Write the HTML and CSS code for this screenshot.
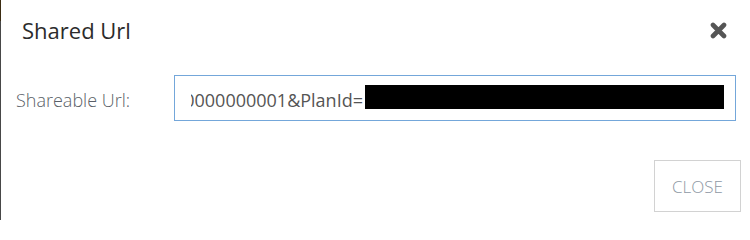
FILE: index.html
```html
<!DOCTYPE html>
<html lang="en">
<head>
<meta charset="utf-8">
<title>Shared Url</title>
<link rel="stylesheet" href="styles.css">
</head>
<body>
<div class="page">
  <div class="edge"></div>
  <div class="modal">
    <div class="modal-header">
      <h4 class="modal-title">Shared Url</h4>
      <button class="close-x" type="button" aria-label="Close">
        <svg width="17" height="17" viewBox="0 0 17 17" aria-hidden="true">
          <path d="M3 3 L14 14 M14 3 L3 14" stroke="#555" stroke-width="4.6" stroke-linecap="round" fill="none"/>
        </svg>
      </button>
    </div>
    <div class="modal-body">
      <label class="field-label">Shareable Url:</label>
      <div class="field">
        <div class="field-clip">
          <span class="field-text">https://portal.example.com/share?Id=10000000001&amp;PlanId=</span><span class="redact"></span>
        </div>
      </div>
    </div>
    <div class="modal-footer">
      <button class="btn-close" type="button">CLOSE</button>
    </div>
  </div>
</div>
</body>
</html>
```
FILE: styles.css
```css
html, body {
  margin: 0;
  padding: 0;
  background: #fff;
}
body {
  font-family: "Open Sans", "Noto Sans", "Liberation Sans", sans-serif;
}
.page {
  display: flex;
  width: 750px;
  height: 220px;
  overflow: hidden;
}
.edge {
  width: 1px;
  flex: none;
  background: linear-gradient(#3b2c12 0, #3b2c12 21px, #474747 21px, #474747 100%);
}
.modal {
  flex: 1;
  min-width: 0;
  display: flex;
  flex-direction: column;
}
.modal-header {
  display: flex;
  align-items: center;
  justify-content: space-between;
  padding: 15px 23px 0 21px;
}
.modal-title {
  margin: 0;
  font-size: 22px;
  line-height: 30px;
  font-weight: 400;
  color: #2b2b2b;
}
.close-x {
  border: 0;
  background: none;
  padding: 0;
  width: 17px;
  height: 17px;
  display: flex;
}
.modal-body {
  display: flex;
  align-items: center;
  margin-top: 30px;
  padding-right: 14px;
}
.field-label {
  width: 173px;
  flex: none;
  box-sizing: border-box;
  padding: 4px 0 0 15px;
  font-size: 18px;
  font-weight: 300;
  color: #5a5f68;
  line-height: 24px;
}
.field {
  flex: 1;
  min-width: 0;
  height: 46px;
  box-sizing: border-box;
  border: 1px solid #74a7da;
  display: flex;
  align-items: center;
  padding: 0 11px 0 16px;
}
.field-clip {
  flex: 1;
  min-width: 0;
  overflow: hidden;
  display: flex;
  justify-content: flex-end;
  align-items: center;
  white-space: nowrap;
}
.field-text {
  flex: none;
  font-size: 18px;
  line-height: 24px;
  padding-top: 4px;
  color: #555;
}
.redact {
  flex: none;
  width: 359px;
  height: 24px;
  margin: -2px 0 0 2px;
  background: #000;
}
.modal-footer {
  display: flex;
  justify-content: flex-end;
  margin-top: 39px;
  padding-right: 9px;
}
.btn-close {
  width: 87px;
  height: 52px;
  border: 1px solid #d2d2d2;
  background: #fff;
  font-family: "Open Sans", "Noto Sans", "Liberation Sans", sans-serif;
  font-size: 17px;
  font-weight: 300;
  color: #8e98a4;
  padding: 0;
}
```
